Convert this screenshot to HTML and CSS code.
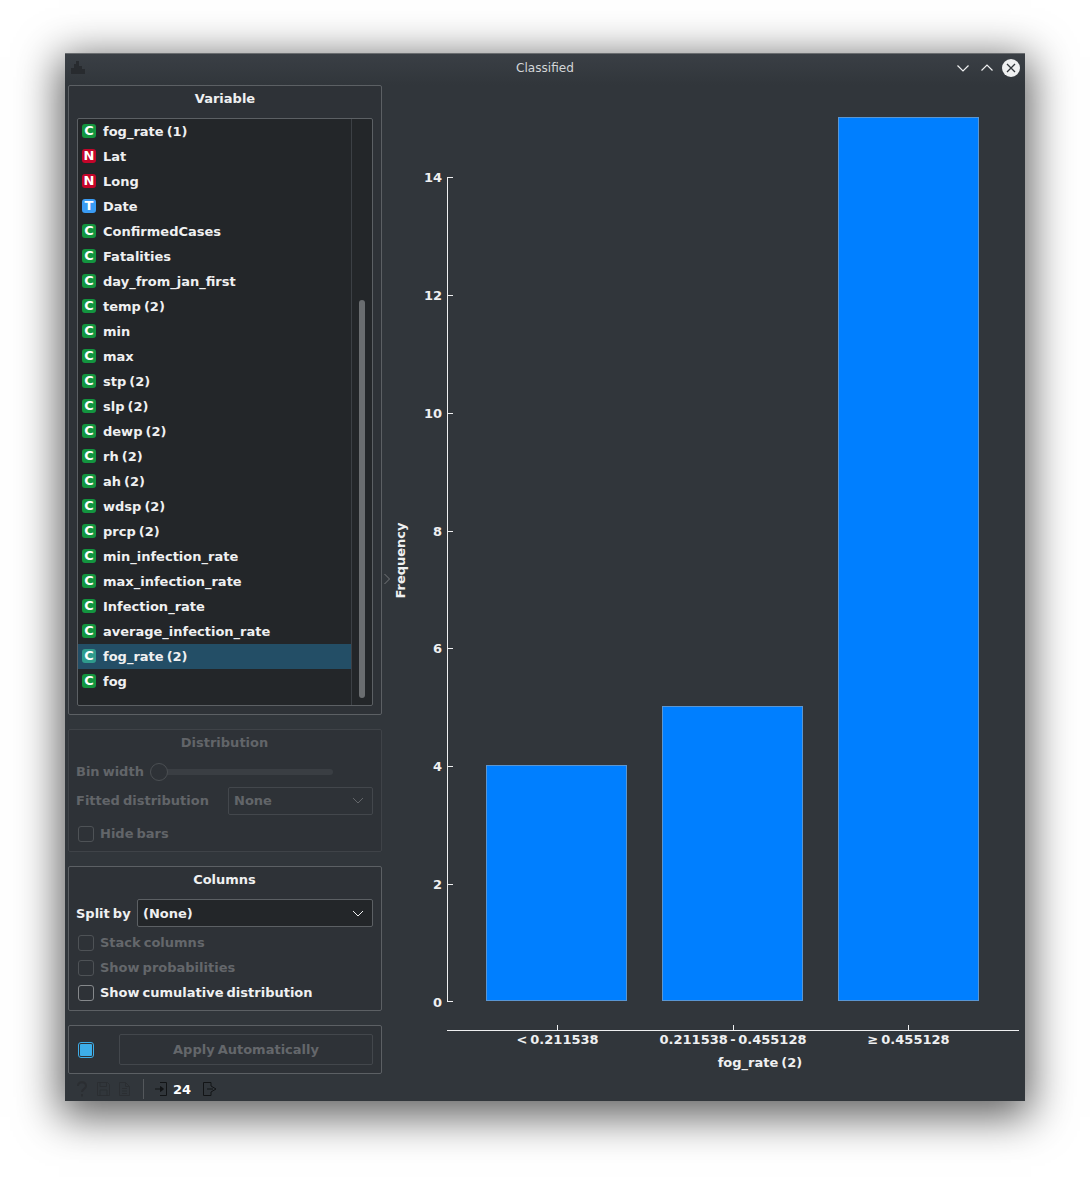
FILE: index.html
```html
<!DOCTYPE html>
<html lang="en">
<head>
<meta charset="utf-8">
<title>Classified</title>
<link rel="stylesheet" href="styles.css">
</head>
<body>
<div class="window">
  <header class="titlebar">
    <svg class="app-icon" width="16" height="16" viewBox="0 0 16 16"><path d="M1 14V8h3V4h2V1h3v5h3v3h3v5z" fill="#282b2f"/></svg>
    <span class="title">Classified</span>
    <div class="win-buttons">
      <svg width="14" height="10" viewBox="0 0 14 10"><path d="M1.500 2.500 7 8l5.500-5.500" class="win-stroke"/></svg>
      <svg width="14" height="10" viewBox="0 0 14 10"><path d="M1.500 7.500 7 2l5.500 5.500" class="win-stroke"/></svg>
      <svg class="close" width="18" height="18" viewBox="0 0 18 18"><circle cx="9" cy="9" r="9" fill="#eff0f1"/><path d="M5 5l8 8M13 5l-8 8" stroke="#31363b" stroke-width="1.300" fill="none"/></svg>
    </div>
  </header>
  <div class="content">
    <aside class="side">
      <section class="box box-var">
        <h2 class="box-title">Variable</h2>
        <div class="list">
          <ul class="rows">
            <li class="row"><span class="badge c">C</span>fog_rate (1)</li>
            <li class="row"><span class="badge n">N</span>Lat</li>
            <li class="row"><span class="badge n">N</span>Long</li>
            <li class="row"><span class="badge t">T</span>Date</li>
            <li class="row"><span class="badge c">C</span>ConfirmedCases</li>
            <li class="row"><span class="badge c">C</span>Fatalities</li>
            <li class="row"><span class="badge c">C</span>day_from_jan_first</li>
            <li class="row"><span class="badge c">C</span>temp (2)</li>
            <li class="row"><span class="badge c">C</span>min</li>
            <li class="row"><span class="badge c">C</span>max</li>
            <li class="row"><span class="badge c">C</span>stp (2)</li>
            <li class="row"><span class="badge c">C</span>slp (2)</li>
            <li class="row"><span class="badge c">C</span>dewp (2)</li>
            <li class="row"><span class="badge c">C</span>rh (2)</li>
            <li class="row"><span class="badge c">C</span>ah (2)</li>
            <li class="row"><span class="badge c">C</span>wdsp (2)</li>
            <li class="row"><span class="badge c">C</span>prcp (2)</li>
            <li class="row"><span class="badge c">C</span>min_infection_rate</li>
            <li class="row"><span class="badge c">C</span>max_infection_rate</li>
            <li class="row"><span class="badge c">C</span>Infection_rate</li>
            <li class="row"><span class="badge c">C</span>average_infection_rate</li>
            <li class="row selected"><span class="badge c">C</span>fog_rate (2)</li>
            <li class="row"><span class="badge c">C</span>fog</li>
          </ul>
          <div class="scroll"><div class="thumb"></div></div>
        </div>
      </section>

      <section class="box box-dist disabled">
        <h2 class="box-title">Distribution</h2>
        <div class="form-row bin-row">
          <span>Bin width</span>
          <div class="slider"><span class="knob"></span></div>
        </div>
        <div class="form-row fit-row">
          <span>Fitted distribution</span>
          <div class="combo combo-fit">None<svg class="chev" width="12" height="7" viewBox="0 0 12 7"><path d="M1 1l5 5 5-5"/></svg></div>
        </div>
        <label class="check check-hide"><span class="cb"></span>Hide bars</label>
      </section>

      <section class="box box-cols">
        <h2 class="box-title">Columns</h2>
        <div class="form-row split-row">
          <span>Split by</span>
          <div class="combo combo-split">(None)<svg class="chev" width="12" height="7" viewBox="0 0 12 7"><path d="M1 1l5 5 5-5"/></svg></div>
        </div>
        <label class="check off"><span class="cb"></span>Stack columns</label>
        <label class="check off"><span class="cb"></span>Show probabilities</label>
        <label class="check"><span class="cb"></span>Show cumulative distribution</label>
      </section>

      <section class="box box-apply">
        <span class="cb cb-on"><span class="cb-fill"></span></span>
        <div class="apply-btn">Apply Automatically</div>
      </section>

      <footer class="status">
        <svg width="10" height="16" viewBox="0 0 10 16" class="ico-dim ico-help"><path d="M1 5c0-5 8-5 8 0 0 3-4 3-4 6M5 13v2.500"/></svg>
        <svg width="13" height="14" viewBox="0 0 13 14" class="ico-dim ico-save"><path d="M.5.500h10l2 2v11H.5zM3 .5v4h6.500v-4M3 13.500V8h7v5.500"/></svg>
        <svg width="11" height="14" viewBox="0 0 11 14" class="ico-dim ico-doc"><path d="M.5.500h6l4 4v9H.5zM6.500.5v4h4M3 6.500h5M3 9h5M3 11.500h5"/></svg>
        <span class="sep"></span>
        <svg width="12" height="14" viewBox="0 0 12 14" class="ico-dark"><path d="M5 .5h6.500v13H5M0 7h8"/><path class="arrow-head" d="M5.500 4.500 8.500 7l-3 2.500z"/></svg>
        <b class="count">24</b>
        <svg width="14" height="14" viewBox="0 0 14 14" class="ico-dark"><path d="M.5 13.500V.5H8V4l5 3-5 3v3.500zM4 7h6"/></svg>
      </footer>
    </aside>

    <svg class="chart" width="643" height="1016" viewBox="382 85 643 1016">
      <path class="splitter" d="M384.500 574l5 5-5 5"/>
      <text class="axis-title" transform="translate(404.500 560.500) rotate(-90)">Frequency</text>
      <path class="axis" d="M447.500 177V1002"/>
      <g class="tick">
        <path d="M448 177.500h5M448 295.500h5M448 413.500h5M448 531.500h5M448 648.500h5M448 766.500h5M448 884.500h5M448 1001.500h5"/>
      </g>
      <g class="label-y">
        <text x="442" y="182">14</text><text x="442" y="300">12</text><text x="442" y="418">10</text><text x="442" y="536">8</text>
        <text x="442" y="653">6</text><text x="442" y="771">4</text><text x="442" y="889">2</text><text x="442" y="1007">0</text>
      </g>
      <g class="bars">
        <rect x="486.500" y="765.500" width="140" height="235"/>
        <rect x="662.500" y="706.500" width="140" height="294"/>
        <rect x="838.500" y="117.500" width="140" height="883"/>
      </g>
      <path class="axis" d="M447 1030.500H1019"/>
      <path class="tick-x" d="M557.500 1025v5M733.500 1025v5M908.500 1025v5"/>
      <g class="label-x">
        <text x="557.500" y="1044">&lt; 0.211538</text>
        <text class="label-tight" x="733" y="1044">0.211538 - 0.455128</text>
        <text x="908.500" y="1044">≥ 0.455128</text>
      </g>
      <text class="axis-title" x="760" y="1067">fog_rate (2)</text>
    </svg>
  </div>
</div>
</body>
</html>
```

FILE: styles.css
```css
* { box-sizing: border-box; }
html, body { margin: 0; padding: 0; background: #fff; }
body {
  width: 1090px;
  height: 1178px;
  padding: 53px 65px 77px;
  font: bold 13px "DejaVu Sans", sans-serif;
  word-spacing: -1.500px;
  color: #eff0f1;
  overflow: hidden;
  white-space: nowrap;
}
.window {
  width: 960px;
  height: 1048px;
  background: #31363b;
  display: flex;
  flex-direction: column;
  box-shadow: 0 10px 40px 6px rgba(0, 0, 0, .62);
  border-top: 1px solid #6a6d70;
}
.titlebar {
  height: 31px;
  flex: none;
  display: flex;
  align-items: center;
  position: relative;
  padding: 0 5px 4px;
  background: linear-gradient(#3a3f45, #31363b);
}
.app-icon { flex: none; }
.title {
  position: absolute;
  left: 0;
  right: 0;
  top: 7px;
  text-align: center;
  font-weight: normal;
  font-size: 12.100px;
  line-height: 15px;
  color: #d3d6d8;
}
.win-buttons {
  margin-left: auto;
  display: flex;
  align-items: center;
  gap: 10px;
}
.win-stroke { fill: none; stroke: #eff0f1; stroke-width: 1.200; }
.close { margin-left: -2px; }
.content { flex: 1; display: flex; min-height: 0; }
.side {
  width: 317px;
  flex: none;
  padding-left: 3px;
  display: flex;
  flex-direction: column;
}
.box {
  width: 314px;
  border: 1px solid #5c6064;
  border-radius: 2px;
  background: #2e3237;
  margin-bottom: 14px;
  flex: none;
}
.box-title {
  margin: 0;
  font: inherit;
  text-align: center;
  height: 25px;
  line-height: 25px;
}
.box-var { height: 630px; padding: 7px 8px 8px; }
.box-var .box-title { height: 25px; line-height: 11px; }
.list {
  height: 588px;
  border: 1px solid #5c6064;
  border-radius: 2px;
  background: #232629;
  display: flex;
}
.rows { list-style: none; margin: 0; padding: 0; flex: 1; min-width: 0; }
.row {
  height: 25px;
  display: flex;
  align-items: center;
  padding-left: 4px;
  gap: 7px;
}
.selected { background: #234e66; }
.badge {
  width: 14px;
  height: 14px;
  flex: none;
  margin-top: -1px;
  border-radius: 3px;
  color: #fff;
  font-size: 13px;
  line-height: 13px;
  text-align: center;
}
.badge.c { background: #13953f; }
.badge.n { background: #c4052a; }
.badge.t { background: #3a9cf4; }
.selected .badge.c { background: #2f9b8c; }
.scroll {
  width: 21px;
  flex: none;
  border-left: 1px solid #3c4045;
  padding-top: 181px;
  display: flex;
  justify-content: center;
}
.thumb { width: 6px; height: 398px; border-radius: 3px; background: #6a6d70; }

.disabled { border-color: #3f4348; color: #626569; }
.box-dist { height: 123px; padding: 0 8px 0 7px; }
.box-dist .box-title { height: 25px; line-height: 25px; }
.form-row { display: flex; align-items: center; }
.bin-row { height: 29px; margin-top: 2px; }
.slider {
  position: relative;
  width: 183px;
  height: 6px;
  margin-left: 6px;
  border-radius: 3px;
  background: #3a3e43;
}
.knob {
  position: absolute;
  left: 0;
  top: -6px;
  width: 18px;
  height: 18px;
  border-radius: 50%;
  border: 1px solid #4b4f53;
  background: #2e3237;
}
.fit-row { height: 29px; justify-content: space-between; }
.combo {
  height: 28px;
  border: 1px solid #5c6064;
  border-radius: 2px;
  padding: 0 5px;
  display: flex;
  align-items: center;
  justify-content: space-between;
}
.combo-fit { width: 145px; border-color: #43474c; background: #2e3237; }
.chev { fill: none; stroke: #eff0f1; stroke-width: 1; margin-right: 3px; }
.combo-fit .chev { stroke: #63666a; }
.check { display: flex; align-items: center; gap: 6px; height: 25px; padding-left: 2px; }
.check-hide { margin-top: 6px; }
.cb {
  width: 16px;
  height: 16px;
  flex: none;
  border: 1px solid #85888b;
  border-radius: 3px;
  background: #2e3237;
}
.disabled .cb, .off .cb { border-color: #4e5256; }
.off { color: #64676b; }

.box-cols { height: 145px; padding: 0 8px 0 7px; }
.box-cols .box-title { height: 25px; line-height: 25px; }
.split-row { gap: 6px; padding-top: 6px; height: 36px; margin-bottom: 2px; justify-content: space-between; }
.combo-split { width: 236px; background: #232629; }

.box-apply {
  height: 49px;
  margin-bottom: 2px;
  padding: 0 8px 0 9px;
  display: flex;
  align-items: center;
  justify-content: space-between;
}
.cb-on {
  border-color: #3daee9;
  display: flex;
  align-items: center;
  justify-content: center;
}
.cb-fill { width: 12px; height: 12px; background: #3daee9; border-radius: 1px; }
.apply-btn {
  width: 254px;
  height: 31px;
  border: 1px solid #43474c;
  border-radius: 2px;
  color: #64676b;
  text-align: center;
  line-height: 29px;
}
.status { flex: 1; display: flex; align-items: center; padding-left: 9px; }
.ico-dim { flex: none; fill: none; stroke: #2b2e32; stroke-width: 1; }
.ico-help { stroke-width: 2; margin-right: 10px; }
.ico-save { margin-right: 9px; }
.ico-doc { margin-right: 13px; }
.sep { width: 1px; height: 20px; background: #54585c; margin-right: 11px; flex: none; }
.ico-dark { flex: none; fill: none; stroke: #121416; stroke-width: 1; }
.arrow-head { fill: #121416; }
.count { margin: 0 12px 0 6px; color: #fff; position: relative; top: 1px; }

.chart { display: block; flex: none; }
.chart text { font: bold 13px "DejaVu Sans", sans-serif; fill: #eff0f1; word-spacing: -1.500px; }
.chart .label-tight { word-spacing: -2px; }
.splitter { fill: none; stroke: #74777a; stroke-width: 1; }
.axis { stroke: #eff0f1; stroke-width: 1; fill: none; }
.tick path, .tick-x { stroke: #eff0f1; stroke-width: 1; fill: none; }
.label-y text { text-anchor: end; }
.label-x text { text-anchor: middle; }
.chart .axis-title { text-anchor: middle; }
.bars rect { fill: #007fff; stroke: #5a96d2; stroke-width: 1; }
```
